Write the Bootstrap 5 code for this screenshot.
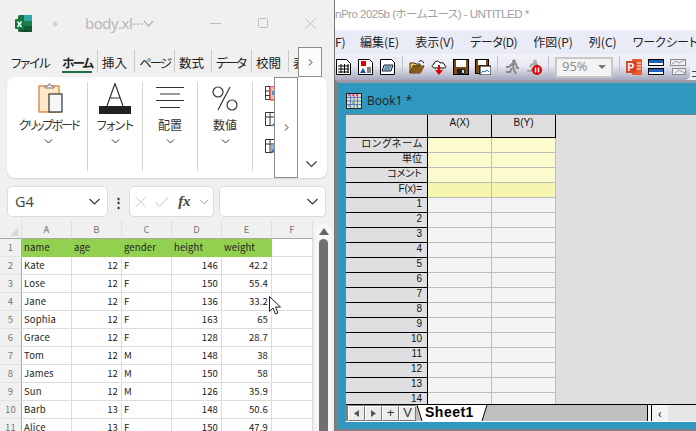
<!DOCTYPE html>
<html lang="ja">
<head>
<meta charset="utf-8">
<title>body.xlsx / Origin</title>
<link href="https://cdn.jsdelivr.net/npm/bootstrap@5.3.0/dist/css/bootstrap.min.css" rel="stylesheet">
<style>
html,body{height:431px;overflow:hidden;margin:0;background:#fff;font-family:"Noto Sans CJK JP","Liberation Sans",sans-serif;font-feature-settings:"palt";}
.desk{height:431px;width:696px;overflow:hidden;position:relative;}
/* excel pane */
.xl{width:335px;flex:none;background:#f0f0f0;border-right:1px solid #777;height:431px;}
.xl-title{height:46px;color:#b4b4b4;font-family:"Open Sans","Noto Sans CJK JP",sans-serif;font-size:15px;}
.xl-logo{margin-left:15px;width:17px;height:17px;}
.xl-more{margin-left:20px;font-size:11px;width:33px;letter-spacing:-1px;}
.xl-name{width:58px;white-space:nowrap;letter-spacing:-.45px;}
.xl-ctl{margin-left:56px;gap:37px;}
.xl-tabs{height:31px;font-size:12.5px;color:#222;padding-top:4px;padding-left:11px;white-space:nowrap;overflow:hidden;}
.xl-tab{height:24px;line-height:25px;flex:none;}
.tab-file{width:51px;letter-spacing:-1.2px;}
.tab-home{font-weight:700;border-bottom:2px solid #1d6f42;height:23px;width:30px;letter-spacing:-1.8px;}
.tab-slot{height:22px;flex:none;border-left:1px solid #c8c8c8;padding-left:4px;line-height:25px;}
.slot-a{width:37px;}
.slot-b{width:40px;letter-spacing:-2px;overflow:hidden;}
.tab-lead{margin-left:5px;}
.ribbon{height:101px;margin:0 7px;background:#fff;border-radius:8px;box-shadow:0 1px 2px rgba(0,0,0,.12);padding-top:5px;}
.rb-group{height:89px;border-right:1px solid #d4d4d4;flex:none;width:55px;font-size:12px;color:#333;}
.rb-first{width:81px;padding-left:3px;}
.rb-clip{margin-left:4px;}
.rb-icon{height:34px;margin-top:1px;flex:none;}
.rb-label{line-height:16px;white-space:nowrap;}
.rb-tight{letter-spacing:-2px;}
.rb-snug{letter-spacing:-.6px;}
.rb-chev{margin-top:6px;}
.rb-last{width:22px;padding:4px 0 0 12px;gap:11px;flex:none;}
.rb-fold{margin-left:auto;margin-right:10px;margin-top:78px;flex:none;height:8px;}
.fx-bar{height:31px;margin:8px 7px 3px;}
.fx-box{background:#fff;border:1px solid #dcdcdc;border-radius:5px;height:31px;flex:none;}
.fx-name{width:101px;padding:0 7px;font-size:14.5px;color:#444;font-family:"Open Sans",sans-serif;}
.fx-dots{width:21px;font-weight:700;font-size:13px;color:#333;flex:none;}
.fx-fn{width:85px;padding:0 5px;gap:9px;}
.fx-f{font-family:"Liberation Serif",serif;font-style:italic;font-weight:700;font-size:15px;color:#444;}
.fx-in{width:107px;margin-left:5px;padding:0 7px;}
.xl-sheet{height:211px;overflow:hidden;}
.xtb{table-layout:fixed;width:313px;flex:none;border-collapse:separate;border-spacing:0;font-size:9.5px;letter-spacing:.15px;color:#222;font-family:"Noto Sans CJK JP","Liberation Sans",sans-serif;background:#fff;align-self:flex-start;}
.xtb th,.xtb td{height:18px;padding:0 3px 0 2px;line-height:15px;border-right:1px solid #dcdcdc;border-bottom:1px solid #dcdcdc;white-space:nowrap;overflow:hidden;font-weight:400;}
.xtb thead th{height:19px;background:#f0f0f0;color:#777;text-align:center;font-size:9.5px;border-color:#e0e0e0;border-bottom:1px solid #a8a8a8;padding:0;}
.xtb tbody th{background:#f0f0f0;color:#777;text-align:center;font-size:9.5px;padding:0;border-right:1px solid #a8a8a8;border-bottom-color:#e4e4e4;}
.xtb .hd td{background:#92d050;border-color:#92d050;color:#222;}
.xtb .hd td:last-child{background:#fff;border-color:#dcdcdc;}
.xtb td.nm{text-align:right;}
.xl-scroll{width:17px;margin:4px 0 0 2px;background:#f7f7f7;border-radius:8px 8px 0 0;flex:none;padding-top:4px;gap:4px;}
.xl-thumb{width:9px;flex:1;background:#707070;border-radius:5px 5px 0 0;}
.flyout{position:absolute;background:#fcfcfc;border:1px solid #8c8c8c;width:24px;}
.fly-a{left:298px;top:47px;height:30px;}
.fly-b{left:274px;top:77px;height:101px;background:#fff;}
.cursor{position:absolute;left:269px;top:296px;}
/* origin pane */
.og{min-width:0;height:431px;}
.og-title{height:30px;line-height:29px;font-size:11.5px;letter-spacing:-.5px;color:#a0a0a0;white-space:nowrap;font-family:"Liberation Sans","Noto Sans CJK JP",sans-serif;}
.og-menu{height:24px;background:#e9ebf6;font-size:12px;color:#222;white-space:nowrap;overflow:hidden;line-height:24px;}
.og-menu span{flex:none;margin-right:16px;}
.og-menu .menu-snug{letter-spacing:-.5px;}
.menu-cut{width:9px;}
.og-tools{height:26px;background:#eef0f9;flex:none;}
.og-bar{width:355px;height:26px;flex:none;padding-left:1px;gap:6px;background:linear-gradient(#f2f3fa 0,#e8e9f2 45%,#a8a8be 100%);border-radius:0 5px 5px 0;}
.og-bar svg{flex:none;}
.tool-sep{width:1px;height:22px;background:#c0c0cc;flex:none;}
.og-combo{width:58px;height:21px;flex:none;background:#f4f4f4;border:2px solid #c9c9c9;padding:0 5px;font-size:13px;color:#8b8b8b;font-family:"Open Sans",sans-serif;}
.og-arrow{width:0;height:0;border:4px solid transparent;border-top-color:#777;border-bottom:0;}
.og-grip{width:6px;margin-left:2px;height:6px;border-top:1px solid #444;border-bottom:1px solid #444;align-self:flex-end;margin-bottom:3px;}
.mdi{flex:1;min-height:0;background:#3097bf;border-left:3px solid #808080;border-top:3px solid #9a9aa8;border-bottom:2px solid #808080;padding-bottom:7px;}
.bk-title{height:31px;flex:none;padding:5px 0 0 8px;font-size:12px;color:#222;gap:5px;font-family:"Open Sans",sans-serif;}
.bk-win{flex:1;min-height:0;margin-left:7px;background:#dfdfe1;border-top:1px solid #808080;border-left:1px solid #808080;border-bottom:1px solid #fff;}
.bk-grid{flex:1;min-height:0;overflow:hidden;}
.otb{table-layout:fixed;width:210px;border-collapse:separate;border-spacing:0;font-family:"Liberation Sans","Noto Sans CJK JP",sans-serif;font-size:10px;color:#111;}
.otb th,.otb td{padding:0;font-weight:400;}
.otb thead th{height:23px;background:#dfdfe1;text-align:center;border-right:1px solid #000;border-bottom:1px solid #000;line-height:12px;padding-bottom:6px;}
.otb tbody th{height:15px;line-height:11px;background:#dfdfe1;text-align:right;padding:0 5px 3px 0;border-right:1px solid #000;border-bottom:1px solid #000;vertical-align:top;}
.otb td{background:#f4f4f4;border-right:1px solid #bdbdbd;border-bottom:1px solid #bdbdbd;}
.otb .y1 td{background:#fbfbcd;}
.otb .y2 td{background:#f6f6b0;}
.otb th.wide{letter-spacing:.9px;padding-right:4px;}
.bk-tabs{height:17px;background:#c0c0c0;border-top:1px solid #000;flex:none;}
.nav-btns{width:69px;flex:none;background:#808080;padding:1px 0 0 2px;height:16px;}
.nav-b{width:17px;height:15px;background:#ececec;border:1px solid #fff;border-right-color:#777;border-bottom-color:#777;font-size:13px;line-height:12px;text-align:center;color:#333;font-family:"Liberation Sans",sans-serif;flex:none;}
.nav-b svg{display:block;margin:3px auto 0;}
.sheet-tab{position:relative;width:71px;margin-left:2px;height:16px;flex:none;font-family:"Liberation Sans",sans-serif;font-weight:700;font-size:14px;line-height:15px;color:#000;padding-left:8px;letter-spacing:.5px;background:#c0c0c0;}
.sheet-bg{position:absolute;left:0;top:0;}
.sheet-txt{position:relative;}
.bk-fill{width:159px;flex:none;height:16px;}
.bk-div{width:5px;border-left:1px solid #000;border-right:1px solid #000;height:16px;background:#f4f4f4;flex:none;}
.bk-l{width:16px;height:16px;background:#f4f4f4;font-size:12px;line-height:15px;text-align:center;font-weight:700;color:#333;flex:none;}
.bk-track{flex:1;height:16px;background:#e6e6e6;}
</style>
</head>
<body>
<div class="desk d-flex">
  <div class="xl d-flex flex-column">
    <div class="xl-title d-flex align-items-center">
      <svg class="xl-logo" viewBox="0 0 17 17"><rect x="3" y="0" width="14" height="17" rx="1.5" fill="#1e7145"/><rect x="9" y="0" width="8" height="6" fill="#33a3a8"/><rect x="9" y="6" width="8" height="5" fill="#168049"/><rect x="9" y="11" width="8" height="6" fill="#0e5c2f"/><rect x="0" y="4" width="9" height="10" rx="1" fill="#10793f"/><path d="M2.5 6.5l4 5.5M6.5 6.5l-4 5.5" stroke="#fff" stroke-width="1.4"/><path d="M6 14v2h6" stroke="#222" stroke-width=".8" fill="none"/></svg>
      <span class="xl-more">&#187;</span>
      <span class="xl-name">body.xl&#183;&#183;&#183;</span>
      <svg width="11" height="7" viewBox="0 0 11 7"><path d="M1 1l4.500 5L10 1" stroke="#b4b4b4" fill="none" stroke-width="1.2"/></svg>
      <div class="xl-ctl d-flex align-items-center">
        <svg width="11" height="11" viewBox="0 0 11 11"><path d="M0 5.500h11" stroke="#bdbdbd"/></svg>
        <svg width="10" height="10" viewBox="0 0 10 10"><rect x=".5" y=".5" width="9" height="9" rx="1" stroke="#bdbdbd" fill="none"/></svg>
        <svg width="11" height="11" viewBox="0 0 11 11"><path d="M.5.500l10 10M10.500.5l-10 10" stroke="#bdbdbd"/></svg>
      </div>
    </div>
    <div class="xl-tabs d-flex">
      <div class="xl-tab tab-file">ファイル</div>
      <div class="xl-tab tab-home">ホーム</div>
      <div class="tab-lead"></div>
      <div class="tab-slot slot-a">挿入</div>
      <div class="tab-slot slot-b">ページ</div>
      <div class="tab-slot slot-a">数式</div>
      <div class="tab-slot slot-b">データ</div>
      <div class="tab-slot slot-a">校閲</div>
      <div class="tab-slot slot-a">表</div>
    </div>
    <div class="ribbon d-flex">
      <div class="rb-group rb-first d-flex flex-column align-items-center">
        <svg class="rb-icon rb-clip" width="30" height="34" viewBox="0 0 30 34"><rect x="3" y="3" width="20" height="26" fill="#fde9c8" stroke="#d57a2c" stroke-width="1.2"/><path d="M9 5V3h3l1.500-2.500L15 3h3v2z" fill="#f4f4f4" stroke="#777"/><rect x="13" y="11" width="13" height="18" fill="#f7f7f7" stroke="#333" stroke-width="1.2"/></svg>
        <div class="rb-label rb-tight">クリップボード</div>
        <svg class="rb-chev" width="9" height="5" viewBox="0 0 9 5"><path d="M1 .5l3.500 3.500L8 .5" stroke="#333" fill="none"/></svg>
      </div>
      <div class="rb-group d-flex flex-column align-items-center">
        <svg class="rb-icon" width="32" height="34" viewBox="0 0 32 34"><path d="M8 23L16 .5 24 23M11 15h10" stroke="#333" stroke-width="1.2" fill="none"/><rect x="0" y="23" width="32" height="8" fill="#222"/></svg>
        <div class="rb-label rb-snug">フォント</div>
        <svg class="rb-chev" width="9" height="5" viewBox="0 0 9 5"><path d="M1 .5l3.500 3.500L8 .5" stroke="#333" fill="none"/></svg>
      </div>
      <div class="rb-group d-flex flex-column align-items-center">
        <svg class="rb-icon" width="28" height="34" viewBox="0 0 28 34"><path d="M0 4.500h28M4 11h20M0 17.500h28M4 24.500h20" stroke="#333"/></svg>
        <div class="rb-label">配置</div>
        <svg class="rb-chev" width="9" height="5" viewBox="0 0 9 5"><path d="M1 .5l3.500 3.500L8 .5" stroke="#333" fill="none"/></svg>
      </div>
      <div class="rb-group d-flex flex-column align-items-center">
        <svg class="rb-icon" width="26" height="34" viewBox="0 0 26 34"><circle cx="6" cy="9" r="5" stroke="#333" fill="none" stroke-width="1.2"/><circle cx="20" cy="22" r="5" stroke="#333" fill="none" stroke-width="1.2"/><path d="M18 4L6 27" stroke="#333" stroke-width="1.2"/></svg>
        <div class="rb-label">数値</div>
        <svg class="rb-chev" width="9" height="5" viewBox="0 0 9 5"><path d="M1 .5l3.500 3.500L8 .5" stroke="#333" fill="none"/></svg>
      </div>
      <div class="rb-last d-flex flex-column">
        <svg width="16" height="15" viewBox="0 0 16 15"><path d="M.5.500h13v13H.5zM.5 5h13M.5 9.500h13M5 .5v13" stroke="#333" fill="none"/><rect x="5" y="0" width="9" height="14" fill="#f6b9a8" stroke="#e01b1b"/><rect x="7" y="5" width="4" height="4" fill="#3f9ae0"/></svg>
        <svg width="16" height="16" viewBox="0 0 16 16"><path d="M.5.500h13v13H.5zM.5 5h13M5 .5v13" stroke="#333" fill="none"/><path d="M6 14l8-8v8z" fill="#2f7fd0"/></svg>
        <svg width="16" height="16" viewBox="0 0 16 16"><path d="M.5.500h13v13H.5zM.5 5h13M5 .5v13" stroke="#333" fill="none"/><rect x="6" y="6" width="8" height="8" fill="#7db8ea"/><path d="M6 14l6-6" stroke="#1f5fb0" stroke-width="1.5"/></svg>
      </div>
      <svg class="rb-fold" width="11" height="7" viewBox="0 0 11 7"><path d="M.5 1l5 5 5-5" stroke="#333" fill="none" stroke-width="1.1"/></svg>
    </div>
    <div class="fx-bar d-flex align-items-center">
      <div class="fx-box fx-name d-flex align-items-center justify-content-between"><span>G4</span><svg width="11" height="7" viewBox="0 0 11 7"><path d="M.5 1l5 5 5-5" stroke="#333" fill="none" stroke-width="1.1"/></svg></div>
      <div class="fx-dots text-center">&#8942;</div>
      <div class="fx-box fx-fn d-flex align-items-center">
        <svg width="12" height="12" viewBox="0 0 12 12"><path d="M.5.500l11 11M11.500.5l-11 11" stroke="#c4c4c4"/></svg>
        <svg width="15" height="12" viewBox="0 0 15 12"><path d="M.5 6l4 5L14.500.5" stroke="#c4c4c4" fill="none"/></svg>
        <span class="fx-f">fx</span>
        <svg width="9" height="6" viewBox="0 0 9 6"><path d="M.5 1l4 4 4-4" stroke="#999" fill="none"/></svg>
      </div>
      <div class="fx-box fx-in d-flex align-items-center justify-content-end"><svg width="11" height="7" viewBox="0 0 11 7"><path d="M.5 1l5 5 5-5" stroke="#333" fill="none" stroke-width="1.1"/></svg></div>
    </div>
    <div class="xl-sheet d-flex">
      <table class="xtb">
        <colgroup><col style="width:22px"><col style="width:50px"><col style="width:50px"><col style="width:50px"><col style="width:50px"><col style="width:50px"><col style="width:41px"></colgroup>
        <thead><tr><th><svg width="21" height="17" viewBox="0 0 21 17"><path d="M18 7v8h-8z" fill="#d8d8d8"/></svg></th><th>A</th><th>B</th><th>C</th><th>D</th><th>E</th><th>F</th></tr></thead>
        <tbody>
          <tr class="hd"><th>1</th><td>name</td><td>age</td><td>gender</td><td>height</td><td>weight</td><td></td></tr>
          <tr><th>2</th><td>Kate</td><td class="nm">12</td><td>F</td><td class="nm">146</td><td class="nm">42.2</td><td></td></tr>
          <tr><th>3</th><td>Lose</td><td class="nm">12</td><td>F</td><td class="nm">150</td><td class="nm">55.4</td><td></td></tr>
          <tr><th>4</th><td>Jane</td><td class="nm">12</td><td>F</td><td class="nm">136</td><td class="nm">33.2</td><td></td></tr>
          <tr><th>5</th><td>Sophia</td><td class="nm">12</td><td>F</td><td class="nm">163</td><td class="nm">65</td><td></td></tr>
          <tr><th>6</th><td>Grace</td><td class="nm">12</td><td>F</td><td class="nm">128</td><td class="nm">28.7</td><td></td></tr>
          <tr><th>7</th><td>Tom</td><td class="nm">12</td><td>M</td><td class="nm">148</td><td class="nm">38</td><td></td></tr>
          <tr><th>8</th><td>James</td><td class="nm">12</td><td>M</td><td class="nm">150</td><td class="nm">58</td><td></td></tr>
          <tr><th>9</th><td>Sun</td><td class="nm">12</td><td>M</td><td class="nm">126</td><td class="nm">35.9</td><td></td></tr>
          <tr><th>10</th><td>Barb</td><td class="nm">13</td><td>F</td><td class="nm">148</td><td class="nm">50.6</td><td></td></tr>
          <tr><th>11</th><td>Alice</td><td class="nm">13</td><td>F</td><td class="nm">150</td><td class="nm">47.9</td><td></td></tr>
        </tbody>
      </table>
      <div class="xl-scroll d-flex flex-column align-items-center">
        <svg width="10" height="7" viewBox="0 0 10 7"><path d="M5 0l5 7H0z" fill="#666"/></svg>
        <div class="xl-thumb"></div>
      </div>
    </div>
  </div>

  <div class="og flex-grow-1 d-flex flex-column">
    <div class="og-title">nPro 2025b (ホームユース) - UNTITLED *</div>
    <div class="og-menu d-flex"><span class="menu-cut">F)</span><span>編集(E)</span><span>表示(V)</span><span class="menu-snug">データ(D)</span><span>作図(P)</span><span>列(C)</span><span>ワークシート(</span></div>
    <div class="og-tools d-flex">
      <div class="og-bar d-flex align-items-center">
        <svg width="16" height="16" viewBox="0 0 16 16"><path d="M.5.500h10l4 4v11H.5z" fill="#fff" stroke="#000"/><path d="M2 7h11M2 10h11M2 13h11M5 5v9M8.500 5v9M12 5v9" stroke="#000"/></svg>
        <svg width="16" height="16" viewBox="0 0 16 16"><path d="M.5.500h11l3 3v12H.5z" fill="#fff" stroke="#000"/><rect x="3" y="2" width="5" height="5" fill="#e00000"/><path d="M2 14l3-5 3 5z" fill="#1f4fb0"/><path d="M9 9h4M9 11h4M9 13h4" stroke="#000"/></svg>
        <svg width="16" height="16" viewBox="0 0 16 16"><path d="M.5.500h11l3 3v12H.5z" fill="#fff" stroke="#000"/><path d="M4 6h9l-2 6H2z" fill="#a9d3ea" stroke="#123"/><path d="M5 8h6M4 10h6" stroke="#123" stroke-width=".7"/></svg>
        <div class="tool-sep"></div>
        <svg width="16" height="16" viewBox="0 0 16 16"><path d="M1 14V4h5l1 1h4v2H4l-3 7h10l4-7H4" fill="#f2c65a" stroke="#3a2a00"/><path d="M1 14l3-6h11l-3 6z" fill="#8a5a1a"/><path d="M10 3c1-2 3-2 4 0l1 1" stroke="#000" fill="none"/></svg>
        <svg width="16" height="16" viewBox="0 0 16 16"><path d="M4 9C1 9 0 6 3 5c0-3 5-4 6-1 3-1 5 1 4 2 3 1 2 3 0 3z" fill="#fff" stroke="#000"/><path d="M8 6v7" stroke="#e00000" stroke-width="2"/><path d="M4 11l4 5 4-5z" fill="#e00000"/></svg>
        <svg width="16" height="16" viewBox="0 0 16 16"><rect x=".5" y=".5" width="15" height="15" fill="#7a4a10" stroke="#000"/><rect x="3" y="1" width="10" height="7" fill="#fff"/><rect x="4" y="10" width="8" height="5" fill="#222"/><rect x="9" y="11" width="2" height="3" fill="#ddd"/></svg>
        <svg width="16" height="16" viewBox="0 0 16 16"><rect x=".5" y=".5" width="13" height="14" fill="#7a4a10" stroke="#000"/><rect x="3" y="1" width="8" height="5" fill="#fff"/><rect x="5" y="7" width="11" height="9" fill="#fff" stroke="#000"/><path d="M6 14l2-2 2 1 2-2 2 2" stroke="#1f6fd0" fill="none"/></svg>
        <div class="tool-sep"></div>
        <svg width="16" height="16" viewBox="0 0 16 16"><circle cx="10" cy="2.500" r="2" fill="#8a8a8a"/><path d="M7 5h5l1 4h2M8 5L5 8H2M9 6l1 5 2 4M8 9l-2 4H2" stroke="#8a8a8a" stroke-width="2" fill="none"/></svg>
        <svg width="16" height="16" viewBox="0 0 16 16"><circle cx="9" cy="2.500" r="2" fill="#b0b0b0"/><path d="M6 5h5l1 3M6 5L4 8M8 6l1 4M7 9l-2 3H1" stroke="#999" stroke-width="1.6" fill="none"/><circle cx="11" cy="11" r="5" fill="#e00000"/><path d="M9.500 8.500v5M12.500 8.500v5" stroke="#fff" stroke-width="1.500"/></svg>
        <div class="tool-sep"></div>
        <div class="og-combo d-flex align-items-center justify-content-between"><span>95%</span><span class="og-arrow"></span></div>
        <div class="tool-sep"></div>
        <svg width="16" height="16" viewBox="0 0 16 16"><rect x="6" y="0" width="10" height="16" rx="1" fill="#e8592b"/><rect x="0" y="2" width="10" height="12" fill="#d24726"/><text x="1.500" y="12" font-size="10" font-weight="700" fill="#fff" font-family="Liberation Sans">P</text><path d="M11 4h4M11 7h4M11 10h4" stroke="#fff"/></svg>
        <svg width="16" height="16" viewBox="0 0 16 16"><rect x=".5" y=".5" width="15" height="6" fill="#fff" stroke="#000"/><rect x="1" y="1" width="14" height="3" fill="#1f5fc0"/><rect x=".5" y="9.500" width="15" height="6" fill="#fff" stroke="#000"/><rect x="1" y="10" width="14" height="3" fill="#1f5fc0"/></svg>
        <svg width="16" height="16" viewBox="0 0 16 16"><rect x=".5" y=".5" width="15" height="6" fill="#eee" stroke="#8a8a8a"/><rect x="2.500" y="9.500" width="13" height="6" fill="#eee" stroke="#8a8a8a"/><path d="M2 5l4-3 3 2 5-3M5 14l4-3 6 3" stroke="#9a9a9a" fill="none"/></svg>
      </div>
      <div class="og-grip"></div>
    </div>
    <div class="mdi d-flex flex-column">
      <div class="bk-title d-flex align-items-center">
        <svg width="16" height="16" viewBox="0 0 16 16"><rect x=".5" y=".5" width="15" height="15" fill="#d8e8d0" stroke="#222"/><rect x="1" y="1" width="14" height="3" fill="#f3c9d0"/><path d="M1 4.500h14M1 8h14M1 11.500h14M4.500 1v14M8 1v14M11.500 1v14" stroke="#4a5fc0" stroke-width=".8"/><path d="M2 2h2M6 2h2M10 2h2" stroke="#d02020"/><path d="M2 13h2M6 10h2M10 13h2" stroke="#3c9c30"/></svg>
        <span>Book1 *</span>
      </div>
      <div class="bk-win d-flex flex-column">
        <div class="bk-grid">
          <table class="otb">
            <colgroup><col style="width:82px"><col style="width:64px"><col style="width:64px"></colgroup>
            <thead><tr><th></th><th>A(X)</th><th>B(Y)</th></tr></thead>
            <tbody>
              <tr class="y1"><th class="wide">ロングネーム</th><td></td><td></td></tr>
              <tr class="y1"><th>単位</th><td></td><td></td></tr>
              <tr class="y1"><th>コメント</th><td></td><td></td></tr>
              <tr class="y2"><th>F(x)=</th><td></td><td></td></tr>
              <tr><th>1</th><td></td><td></td></tr>
              <tr><th>2</th><td></td><td></td></tr>
              <tr><th>3</th><td></td><td></td></tr>
              <tr><th>4</th><td></td><td></td></tr>
              <tr><th>5</th><td></td><td></td></tr>
              <tr><th>6</th><td></td><td></td></tr>
              <tr><th>7</th><td></td><td></td></tr>
              <tr><th>8</th><td></td><td></td></tr>
              <tr><th>9</th><td></td><td></td></tr>
              <tr><th>10</th><td></td><td></td></tr>
              <tr><th>11</th><td></td><td></td></tr>
              <tr><th>12</th><td></td><td></td></tr>
              <tr><th>13</th><td></td><td></td></tr>
              <tr><th>14</th><td></td><td></td></tr>
            </tbody>
          </table>
        </div>
        <div class="bk-tabs d-flex">
          <div class="nav-btns d-flex">
            <div class="nav-b"><svg width="5" height="7" viewBox="0 0 5 7"><path d="M5 0v7L0 3.500z" fill="#555"/></svg></div>
            <div class="nav-b"><svg width="5" height="7" viewBox="0 0 5 7"><path d="M0 0v7l5-3.500z" fill="#555"/></svg></div>
            <div class="nav-b">+</div>
            <div class="nav-b">V</div>
          </div>
          <div class="sheet-tab">
            <svg class="sheet-bg" width="71" height="16" viewBox="0 0 71 16"><path d="M0 0l5 16h60l5-16z" fill="#fff"/><path d="M0 0l5 16M65 16l5-16" stroke="#000" fill="none"/></svg>
            <span class="sheet-txt">Sheet1</span>
          </div>
          <div class="bk-fill"></div>
          <div class="bk-div"></div>
          <div class="bk-l">&#8249;</div>
          <div class="bk-track"></div>
        </div>
      </div>
    </div>
  </div>

  <div class="flyout fly-a d-flex align-items-center justify-content-center"><svg width="5" height="7" viewBox="0 0 5 7"><path d="M1 .5l3 3-3 3" stroke="#333" fill="none"/></svg></div>
  <div class="flyout fly-b d-flex align-items-center justify-content-center"><svg width="5" height="7" viewBox="0 0 5 7"><path d="M1 .5l3 3-3 3" stroke="#333" fill="none"/></svg></div>
  <svg class="cursor" width="13" height="20" viewBox="0 0 13 20"><path d="M.5.500v15l3.500-3.500 2.500 6 2.500-1-2.500-6h5z" fill="#fff" stroke="#222"/></svg>
</div>
<script src="https://cdn.jsdelivr.net/npm/bootstrap@5.3.0/dist/js/bootstrap.bundle.min.js"></script>
</body>
</html>
